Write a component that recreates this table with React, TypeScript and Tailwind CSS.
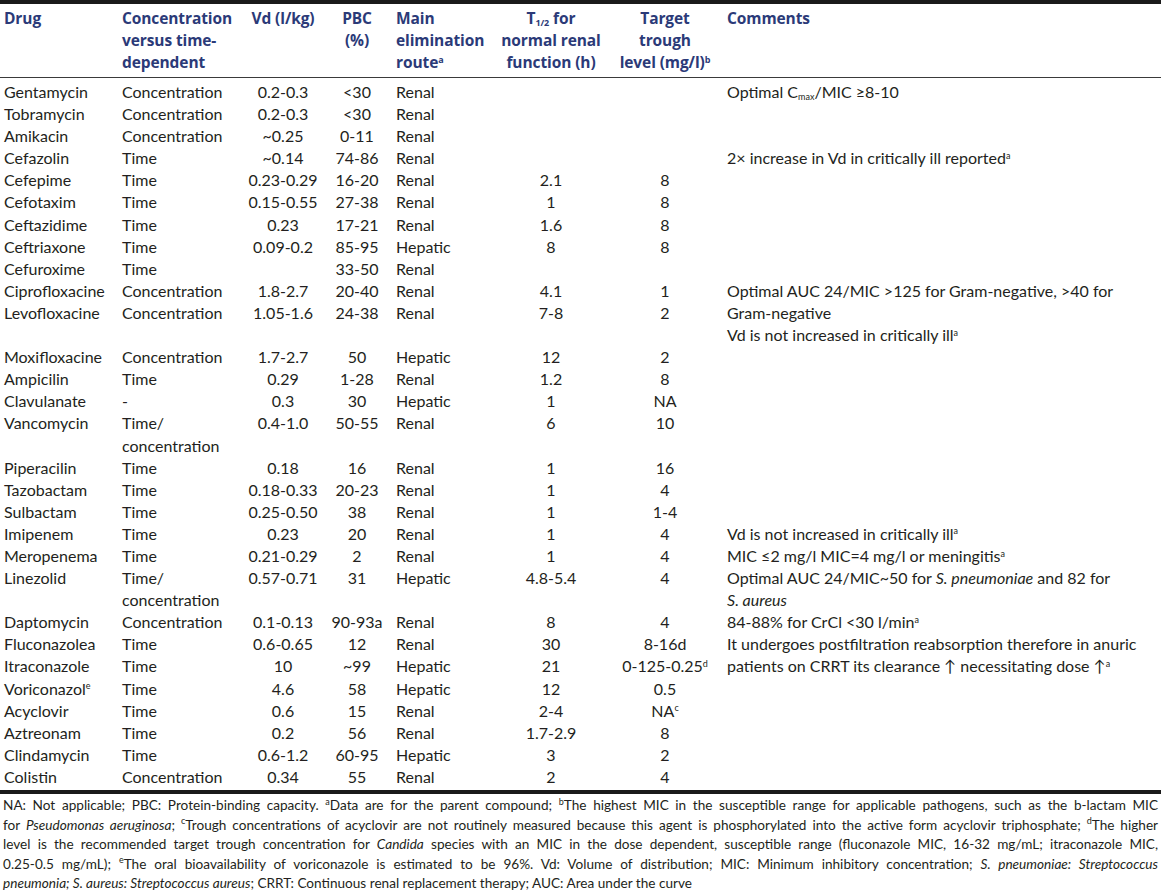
import type { ReactNode } from 'react'

type Row = {
  drug?: ReactNode
  conc?: ReactNode
  vd?: string
  pbc?: string
  route?: string
  t12?: string
  target?: ReactNode
  comment?: ReactNode
}

const Sup = ({ children }: { children: ReactNode }) => (
  <sup className="text-[9px] top-[-0.6em]">{children}</sup>
)

const rows: Row[] = [
  { drug: 'Gentamycin', conc: 'Concentration', vd: '0.2-0.3', pbc: '<30', route: 'Renal', comment: <>Optimal C<sub className="text-[9px]">max</sub>/MIC ≥8-10</> },
  { drug: 'Tobramycin', conc: 'Concentration', vd: '0.2-0.3', pbc: '<30', route: 'Renal' },
  { drug: 'Amikacin', conc: 'Concentration', vd: '~0.25', pbc: '0-11', route: 'Renal' },
  { drug: 'Cefazolin', conc: 'Time', vd: '~0.14', pbc: '74-86', route: 'Renal', comment: <>2× increase in Vd in critically ill reported<Sup>a</Sup></> },
  { drug: 'Cefepime', conc: 'Time', vd: '0.23-0.29', pbc: '16-20', route: 'Renal', t12: '2.1', target: '8' },
  { drug: 'Cefotaxim', conc: 'Time', vd: '0.15-0.55', pbc: '27-38', route: 'Renal', t12: '1', target: '8' },
  { drug: 'Ceftazidime', conc: 'Time', vd: '0.23', pbc: '17-21', route: 'Renal', t12: '1.6', target: '8' },
  { drug: 'Ceftriaxone', conc: 'Time', vd: '0.09-0.2', pbc: '85-95', route: 'Hepatic', t12: '8', target: '8' },
  { drug: 'Cefuroxime', conc: 'Time', pbc: '33-50', route: 'Renal' },
  { drug: 'Ciprofloxacine', conc: 'Concentration', vd: '1.8-2.7', pbc: '20-40', route: 'Renal', t12: '4.1', target: '1', comment: 'Optimal AUC 24/MIC >125 for Gram-negative, >40 for' },
  { drug: 'Levofloxacine', conc: 'Concentration', vd: '1.05-1.6', pbc: '24-38', route: 'Renal', t12: '7-8', target: '2', comment: 'Gram-negative' },
  { comment: <>Vd is not increased in critically ill<Sup>a</Sup></> },
  { drug: 'Moxifloxacine', conc: 'Concentration', vd: '1.7-2.7', pbc: '50', route: 'Hepatic', t12: '12', target: '2' },
  { drug: 'Ampicilin', conc: 'Time', vd: '0.29', pbc: '1-28', route: 'Renal', t12: '1.2', target: '8' },
  { drug: 'Clavulanate', conc: '-', vd: '0.3', pbc: '30', route: 'Hepatic', t12: '1', target: 'NA' },
  { drug: 'Vancomycin', conc: <>Time/<br />concentration</>, vd: '0.4-1.0', pbc: '50-55', route: 'Renal', t12: '6', target: '10' },
  { drug: 'Piperacilin', conc: 'Time', vd: '0.18', pbc: '16', route: 'Renal', t12: '1', target: '16' },
  { drug: 'Tazobactam', conc: 'Time', vd: '0.18-0.33', pbc: '20-23', route: 'Renal', t12: '1', target: '4' },
  { drug: 'Sulbactam', conc: 'Time', vd: '0.25-0.50', pbc: '38', route: 'Renal', t12: '1', target: '1-4' },
  { drug: 'Imipenem', conc: 'Time', vd: '0.23', pbc: '20', route: 'Renal', t12: '1', target: '4', comment: <>Vd is not increased in critically ill<Sup>a</Sup></> },
  { drug: 'Meropenema', conc: 'Time', vd: '0.21-0.29', pbc: '2', route: 'Renal', t12: '1', target: '4', comment: <>MIC ≤2 mg/l MIC=4 mg/l or meningitis<Sup>a</Sup></> },
  {
    drug: 'Linezolid', conc: <>Time/<br />concentration</>, vd: '0.57-0.71', pbc: '31', route: 'Hepatic', t12: '4.8-5.4', target: '4',
    comment: <>Optimal AUC 24/MIC~50 for <i>S. pneumoniae</i> and 82 for<br /><i>S. aureus</i></>,
  },
  { drug: 'Daptomycin', conc: 'Concentration', vd: '0.1-0.13', pbc: '90-93a', route: 'Renal', t12: '8', target: '4', comment: <>84-88% for CrCl &lt;30 l/min<Sup>a</Sup></> },
  { drug: 'Fluconazolea', conc: 'Time', vd: '0.6-0.65', pbc: '12', route: 'Renal', t12: '30', target: '8-16d', comment: 'It undergoes postfiltration reabsorption therefore in anuric' },
  { drug: 'Itraconazole', conc: 'Time', vd: '10', pbc: '~99', route: 'Hepatic', t12: '21', target: <>0-125-0.25<Sup>d</Sup></>, comment: <>patients on CRRT its clearance ↑ necessitating dose ↑<Sup>a</Sup></> },
  { drug: <>Voriconazol<Sup>e</Sup></>, conc: 'Time', vd: '4.6', pbc: '58', route: 'Hepatic', t12: '12', target: '0.5' },
  { drug: 'Acyclovir', conc: 'Time', vd: '0.6', pbc: '15', route: 'Renal', t12: '2-4', target: <>NA<Sup>c</Sup></> },
  { drug: 'Aztreonam', conc: 'Time', vd: '0.2', pbc: '56', route: 'Renal', t12: '1.7-2.9', target: '8' },
  { drug: 'Clindamycin', conc: 'Time', vd: '0.6-1.2', pbc: '60-95', route: 'Hepatic', t12: '3', target: '2' },
  { drug: 'Colistin', conc: 'Concentration', vd: '0.34', pbc: '55', route: 'Renal', t12: '2', target: '4' },
]

const th = 'p-0 pt-[3px] pb-[4px] align-top font-bold border-b border-[#3a3a3a] leading-[22px]'
const td = 'p-0 align-top whitespace-nowrap leading-[22.1px]'

export default function App() {
  return (
    <div className="w-[1161px] h-[892px] bg-white overflow-hidden text-[#231f20] font-['Lato',sans-serif]">
      <div className="border-t-4 border-[#1a1a1a]" />
      <table className="w-[1161px] table-fixed border-separate border-spacing-0 text-[16px]">
        <colgroup>
          <col className="w-[122px]" />
          <col className="w-[118px]" />
          <col className="w-[86px]" />
          <col className="w-[62px]" />
          <col className="w-[104px]" />
          <col className="w-[118px]" />
          <col className="w-[110px]" />
          <col />
        </colgroup>
        <thead className="text-[#2b3a78] font-['Open_Sans',sans-serif] text-[15.5px] tracking-[-0.1px]">
          <tr>
            <th className={`${th} text-left pl-[4px]`}>Drug</th>
            <th className={`${th} text-left`}>Concentration<br />versus time-<br />dependent</th>
            <th className={`${th} text-center`}>Vd (l/kg)</th>
            <th className={`${th} text-center`}>PBC<br />(%)</th>
            <th className={`${th} text-left pl-[8px]`}>Main<br />elimination<br />route<Sup>a</Sup></th>
            <th className={`${th} text-center`}>
              T<sub className="text-[9px] font-bold">1/2</sub> for<br />normal renal<br />function (h)
            </th>
            <th className={`${th} text-center`}>Target<br />trough<br />level (mg/l)<Sup>b</Sup></th>
            <th className={`${th} text-left pl-[7px]`}>Comments</th>
          </tr>
        </thead>
        <tbody>
          {rows.map((r, i) => {
            const pad = i === 0 ? 'pt-[3px]' : i === rows.length - 1 ? 'pb-[1px]' : ''
            return (
              <tr key={i}>
                <td className={`${td} ${pad} pl-[4px]`}>{r.drug}</td>
                <td className={`${td} ${pad}`}>{r.conc}</td>
                <td className={`${td} ${pad} text-center`}>{r.vd}</td>
                <td className={`${td} ${pad} text-center`}>{r.pbc}</td>
                <td className={`${td} ${pad} pl-[8px]`}>{r.route}</td>
                <td className={`${td} ${pad} text-center`}>{r.t12}</td>
                <td className={`${td} ${pad} text-center`}>{r.target}</td>
                <td className={`${td} ${pad} pl-[7px]`}>{r.comment}</td>
              </tr>
            )
          })}
        </tbody>
      </table>
      <div className="border-t-4 border-[#1a1a1a] mt-[1px]" />
      <div className="px-[3px] pt-[2px] text-[13.6px] leading-[19.5px] text-[#231f20]">
        <p className="[text-align-last:justify] whitespace-nowrap">
          NA: Not applicable; PBC: Protein-binding capacity. <Sup>a</Sup>Data are for the parent compound; <Sup>b</Sup>The highest MIC in the susceptible range for applicable pathogens, such as the b-lactam MIC
        </p>
        <p className="[text-align-last:justify] whitespace-nowrap">
          for <i>Pseudomonas aeruginosa</i>; <Sup>c</Sup>Trough concentrations of acyclovir are not routinely measured because this agent is phosphorylated into the active form acyclovir triphosphate; <Sup>d</Sup>The higher
        </p>
        <p className="[text-align-last:justify] whitespace-nowrap">
          level is the recommended target trough concentration for <i>Candida</i> species with an MIC in the dose dependent, susceptible range (fluconazole MIC, 16-32 mg/mL; itraconazole MIC,
        </p>
        <p className="[text-align-last:justify] whitespace-nowrap">
          0.25-0.5 mg/mL); <Sup>e</Sup>The oral bioavailability of voriconazole is estimated to be 96%. Vd: Volume of distribution; MIC: Minimum inhibitory concentration; <i>S. pneumoniae: Streptococcus</i>
        </p>
        <p className="whitespace-nowrap">
          <i>pneumonia; S. aureus: Streptococcus aureus</i>; CRRT: Continuous renal replacement therapy; AUC: Area under the curve
        </p>
      </div>
    </div>
  )
}
